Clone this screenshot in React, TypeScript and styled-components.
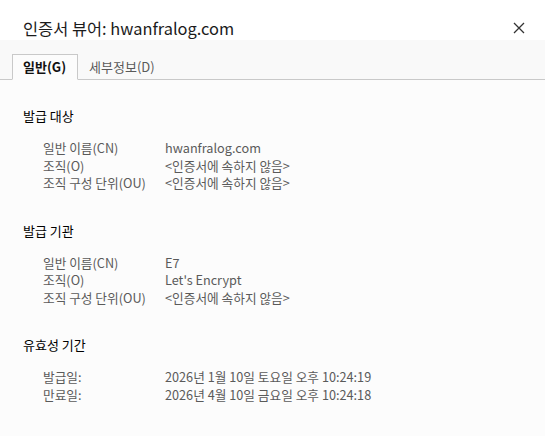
import React, {useState} from "react";
import styled, {createGlobalStyle} from "styled-components";

const GlobalStyle = createGlobalStyle`
  html, body {
    margin: 0;
    padding: 0;
    background: #fcfcfc;
  }
  body {
    font-family: "Noto Sans CJK KR", "Noto Sans", sans-serif;
  }
`;

interface IRow {
    label: string;
    value: string;
}

interface ISection {
    title: string;
    rows: IRow[];
}

const NOT_PART = "<인증서에 속하지 않음>";

const sections: ISection[] = [
    {
        title: "발급 대상",
        rows: [
            {label: "일반 이름(CN)", value: "hwanfralog.com"},
            {label: "조직(O)", value: NOT_PART},
            {label: "조직 구성 단위(OU)", value: NOT_PART},
        ],
    },
    {
        title: "발급 기관",
        rows: [
            {label: "일반 이름(CN)", value: "E7"},
            {label: "조직(O)", value: "Let's Encrypt"},
            {label: "조직 구성 단위(OU)", value: NOT_PART},
        ],
    },
    {
        title: "유효성 기간",
        rows: [
            {label: "발급일:", value: "2026년 1월 10일 토요일 오후 10:24:19"},
            {label: "만료일:", value: "2026년 4월 10일 금요일 오후 10:24:18"},
        ],
    },
];

export default function App() {
    const [tab, setTab] = useState(0);

    return (
        <Window>
            <GlobalStyle />
            <TitleBar>
                <Title>인증서 뷰어: hwanfralog.com</Title>
                <CloseButton aria-label="닫기">
                    <svg width="12" height="12" viewBox="0 0 12 12">
                        <path d="M1 1 L11 11 M11 1 L1 11" stroke="#333" strokeWidth="1.3" />
                    </svg>
                </CloseButton>
            </TitleBar>
            <TabStrip>
                <Tab active={tab === 0} onClick={() => setTab(0)}>일반(G)</Tab>
                <Tab active={tab === 1} onClick={() => setTab(1)}>세부정보(D)</Tab>
            </TabStrip>
            <Content>
                {sections.map((s) => (
                    <Section key={s.title}>
                        <SectionTitle>{s.title}</SectionTitle>
                        <Rows>
                            {s.rows.map((r) => (
                                <Row key={r.label}>
                                    <Label>{r.label}</Label>
                                    <Value>{r.value}</Value>
                                </Row>
                            ))}
                        </Rows>
                    </Section>
                ))}
            </Content>
        </Window>
    );
}

const Window = styled.div`
  width: 545px;
  height: 436px;
  display: flex;
  flex-direction: column;
  background: #fcfcfc;
  overflow: hidden;
`;

const TitleBar = styled.div`
  height: 40px;
  flex-shrink: 0;
  background: #fff;
  display: flex;
  align-items: center;
  justify-content: space-between;
  padding: 15px 20px 0 23px;
  box-sizing: border-box;
`;

const Title = styled.h1`
  margin: 0;
  font-size: 16.4px;
  font-weight: 400;
  color: #1b1b1b;
`;

const CloseButton = styled.button`
  border: none;
  background: transparent;
  padding: 0;
  width: 12px;
  height: 12px;
  display: flex;
  cursor: pointer;
`;

const TabStrip = styled.div`
  display: flex;
  align-items: flex-end;
  height: 40px;
  box-sizing: border-box;
  padding: 0 0 0 12px;
  background: #f9f9f9;
  border-bottom: 1px solid #c9c9c9;
`;

const Tab = styled.div<{active?: boolean}>`
  height: 26px;
  margin-bottom: -1px;
  box-sizing: border-box;
  padding: 0 11px 1px 10px;
  display: flex;
  align-items: center;
  font-size: 13px;
  font-weight: ${({active}) => (active ? 700 : 400)};
  color: ${({active}) => (active ? "#111" : "#5a5a5a")};
  background: ${({active}) => (active ? "#fcfcfc" : "transparent")};
  border: 1px solid ${({active}) => (active ? "#c9c9c9" : "transparent")};
  border-bottom-color: ${({active}) => (active ? "#fcfcfc" : "transparent")};
  cursor: pointer;
`;

const Content = styled.div`
  padding: 27px 0 0 23px;
  display: flex;
  flex-direction: column;
  gap: 30px;
`;

const Section = styled.div`
  display: flex;
  flex-direction: column;
  gap: 14px;
`;

const SectionTitle = styled.div`
  font-size: 13px;
  line-height: 18px;
  color: #000;
`;

const Rows = styled.div`
  display: flex;
  flex-direction: column;
  padding-left: 20px;
`;

const Row = styled.div`
  display: grid;
  grid-template-columns: 122px auto;
  font-size: 12.7px;
  line-height: 17.5px;
  color: #5a5a5a;
`;

const Label = styled.span``;

const Value = styled.span``;
